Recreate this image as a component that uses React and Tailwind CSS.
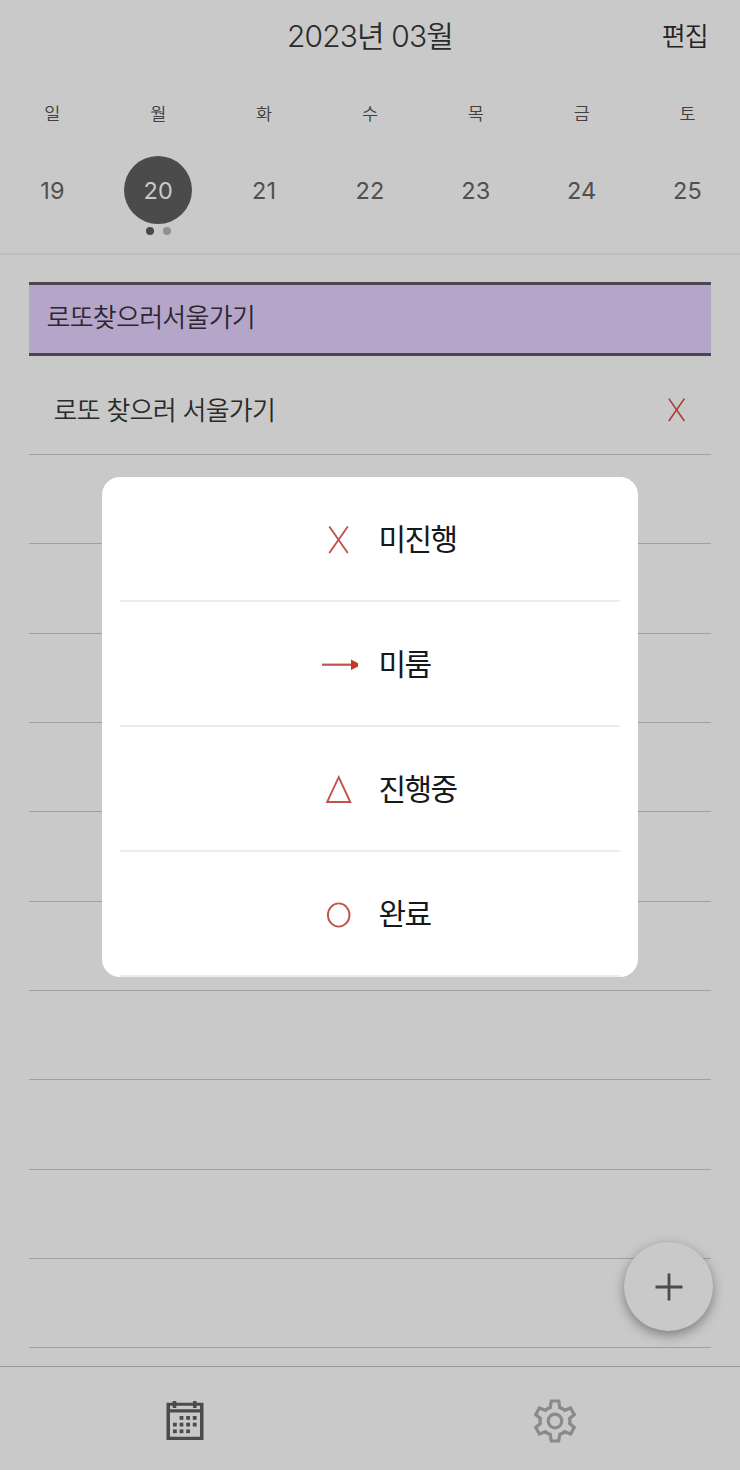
import React, { useState } from 'react';

const days = [
  { label: '일', date: 19 },
  { label: '월', date: 20 },
  { label: '화', date: 21 },
  { label: '수', date: 22 },
  { label: '목', date: 23 },
  { label: '금', date: 24 },
  { label: '토', date: 25 },
];

const statuses = [
  { id: 'none', label: '미진행' },
  { id: 'delay', label: '미룸' },
  { id: 'doing', label: '진행중' },
  { id: 'done', label: '완료' },
];

function StatusIcon({ status, className }) {
  return (
    <svg viewBox="0 0 40 40" fill="none" strokeWidth="1.9" className={className}>
      {status === 'none' && <path d="M10.3 6.5L28.8 33M28.8 6.5L10.3 33" />}
      {status === 'delay' && (
        <>
          <path d="M3 19.7H32" strokeWidth="2.2" />
          <path d="M32 14.6L39 18.2V21.4L32 25Z" fill="#bd3a2e" stroke="none" />
        </>
      )}
      {status === 'doing' && <path d="M19.7 7.2L31.3 32H8.1Z" />}
      {status === 'done' && <ellipse cx="19.7" cy="20" rx="10.8" ry="11.6" />}
    </svg>
  );
}

function CalendarIcon() {
  const dots = [
    [1, 0], [2, 0], [3, 0],
    [0, 1], [1, 1], [2, 1], [3, 1],
    [0, 2], [1, 2], [2, 2],
  ];

  return (
    <svg viewBox="0 0 40 40" className="size-10 text-[#4b4b4b]" fill="currentColor">
      <path fillRule="evenodd" d="M1.5 1.7H38.5V39H1.5ZM5 4.8V8.2H35V4.8ZM5 11.5V35.8H35V11.5Z" />
      <path d="M7.7 0h3.6v7H7.7zM28 0h3.6v7H28z" />
      {dots.map(([x, y]) => (
        <rect key={`${x}-${y}`} x={8 + x * 6.6} y={15 + y * 6.7} width="3.8" height="3.8" />
      ))}
    </svg>
  );
}

function GearIcon() {
  return (
    <svg viewBox="0 0 44 44" className="size-11" fill="none" stroke="#8a8a8a" strokeWidth="3.2">
      <path d="M18.3 2H25.7L26.8 8.6Q29.8 9.4 31.7 11.3L37.6 9L41.3 15.6L36.6 19.5Q37.4 22 36.6 24.5L41.3 28.4L37.6 35L31.7 32.7Q29.8 34.6 26.8 35.4L25.7 42H18.3L17.2 35.4Q14.2 34.6 12.3 32.7L6.4 35L2.7 28.4L7.4 24.5Q6.6 22 7.4 19.5L2.7 15.6L6.4 9L12.3 11.3Q14.2 9.4 17.2 8.6Z" />
      <circle cx="22" cy="22" r="6.8" />
    </svg>
  );
}

function Week({ selected, onSelect }) {
  return (
    <div className="grid grid-cols-7 -ml-px">
      {days.map(({ label, date }) => (
        <button key={date} onClick={() => onSelect(date)} className="flex flex-col items-center">
          <span className="h-6 pt-px pl-px text-[17.5px] leading-6 font-[350] text-[#3f3f3f]">{label}</span>
          <span
            className={`mt-[31px] flex size-[68px] items-center justify-center rounded-full pt-0.5 pl-px text-[23.5px] tracking-[0.2px] ${
              selected === date ? 'bg-[#4b4b4b] text-[#c9c9c9]' : 'text-[#505050]'
            }`}
          >
            {date}
          </span>
          {date === 20 && (
            <span className="mt-[3px] flex gap-[9px] pl-px">
              <span className="size-2 rounded-full bg-[#484848]" />
              <span className="size-2 rounded-full bg-[#8f8f8f]" />
            </span>
          )}
        </button>
      ))}
    </div>
  );
}

function App() {
  const [selected, setSelected] = useState(20);
  const [status, setStatus] = useState('none');

  return (
    <div className="relative flex h-[1470px] w-[740px] flex-col overflow-hidden bg-[#c9c9c9] font-[Inter,'Noto_Sans_CJK_KR',sans-serif]">
      <header className="h-[255px] shrink-0 border-b-2 border-[#bfbfbf]">
        <div className="grid h-[101px] grid-cols-3 items-start px-8 pt-4">
          <span />
          <h1 className="text-center text-[30px] leading-10 font-[350] tracking-[-0.9px] whitespace-nowrap text-[#2b2b2b]">
            2023년 03월
          </h1>
          <button className="pt-px text-right text-[26px] leading-10 font-[350] tracking-[-0.8px] text-[#222]">편집</button>
        </div>
        <Week selected={selected} onSelect={setSelected} />
      </header>

      <main className="min-h-0 flex-1 overflow-hidden px-[29px] pt-[27px]">
        <h2 className="h-[74px] border-y-[3px] border-[#4b484d] bg-[#b5a6c9] pl-[17.5px] text-[26px] leading-[66px] font-[350] tracking-[-0.75px] text-[#2b2630]">
          로또찾으러서울가기
        </h2>
        <div className="flex h-[99px] items-center justify-between border-b border-[#a0a0a0] pt-2.5 pr-3.5 pl-[24.5px]">
          <span className="text-[26px] font-[350] tracking-[-0.75px] text-[#2a2a2a]">로또 찾으러 서울가기</span>
          <StatusIcon status={status} className="size-10 scale-[0.84] stroke-[#a93d33]" />
        </div>
        {[...Array(10)].map((_, i) => (
          <div key={i} className="h-[89.35px] border-b border-[#a0a0a0]" />
        ))}
      </main>

      <nav className="grid h-[104px] shrink-0 grid-cols-2 place-items-center border-t border-[#999] pt-1">
        <button><CalendarIcon /></button>
        <button><GearIcon /></button>
      </nav>

      {/* 할 일 추가 버튼 */}
      <button className="absolute right-[27px] bottom-[139px] flex size-[89px] items-center justify-center rounded-full bg-[#c9c9c9] shadow-[0_4px_12px_rgba(0,0,0,0.38)]">
        <svg viewBox="0 0 28 28" className="size-7" stroke="#4b4b4b" strokeWidth="2.8">
          <path d="M0.5 14H27.5M14 0.5V27.5" />
        </svg>
      </button>

      {/* 진행 상태 선택 */}
      <div className="absolute top-[477px] left-[102px] h-[500px] w-[536px] overflow-hidden rounded-[18px] bg-white px-[18px]">
        {statuses.map(({ id, label }) => (
          <button
            key={id}
            onClick={() => setStatus(id)}
            className="flex h-[125px] w-full items-center border-b-2 border-[#ebecec] pt-0.5 pl-[199px]"
          >
            <StatusIcon status={id} className="size-10 stroke-[#c0544a]" />
            <span className="pl-[19.5px] text-[30px] tracking-[-1.6px] text-[#16181c]">{label}</span>
          </button>
        ))}
      </div>
    </div>
  );
}

export default App;
